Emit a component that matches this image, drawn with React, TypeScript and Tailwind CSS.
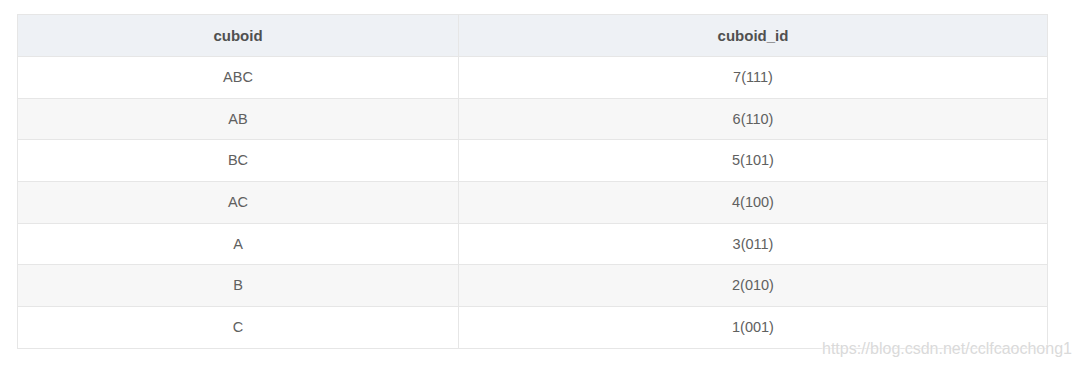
import React from 'react';

type Row = { cuboid: string; id: string };

const rows: Array<Row> = [
  { cuboid: 'ABC', id: '7(111)' },
  { cuboid: 'AB', id: '6(110)' },
  { cuboid: 'BC', id: '5(101)' },
  { cuboid: 'AC', id: '4(100)' },
  { cuboid: 'A', id: '3(011)' },
  { cuboid: 'B', id: '2(010)' },
  { cuboid: 'C', id: '1(001)' },
];

export default function App() {
  return (
    <div
      className="relative h-[371px] w-[1080px] overflow-hidden bg-white pl-[17px] pt-[14px]"
      style={{ fontFamily: '"Liberation Sans", Arial, sans-serif' }}
    >
      <table className="w-[1031px] table-fixed border-collapse text-center">
        <colgroup>
          <col className="w-[441px]" />
          <col />
        </colgroup>
        <thead>
          <tr className="h-[42px] bg-[#eef1f5]">
            <th className="border border-[#e6e6e6] pt-[1px] text-[15px] font-bold text-[#505050]">cuboid</th>
            <th className="border border-[#e6e6e6] pt-[1px] text-[15px] font-bold text-[#505050]">cuboid_id</th>
          </tr>
        </thead>
        <tbody>
          {rows.map((row, index) => (
            <tr key={row.cuboid} className={`h-[41.7px] ${index % 2 === 1 ? 'bg-[#f7f7f7]' : 'bg-white'}`}>
              <td className="border border-[#e6e6e6] pt-[1px] text-[14.5px] text-[#606060]">{row.cuboid}</td>
              <td className="border border-[#e6e6e6] pt-[1px] text-[14.5px] text-[#606060]">{row.id}</td>
            </tr>
          ))}
        </tbody>
      </table>

      {/* watermark */}
      <div
        className="absolute left-[822px] top-[339px] text-[16px] leading-[20px] text-[#dadada]"
        style={{ textShadow: '0 0 2px #fff, 0 0 2px #fff' }}
      >
        https://blog.csdn.net/cclfcaochong1
      </div>
    </div>
  );
}
